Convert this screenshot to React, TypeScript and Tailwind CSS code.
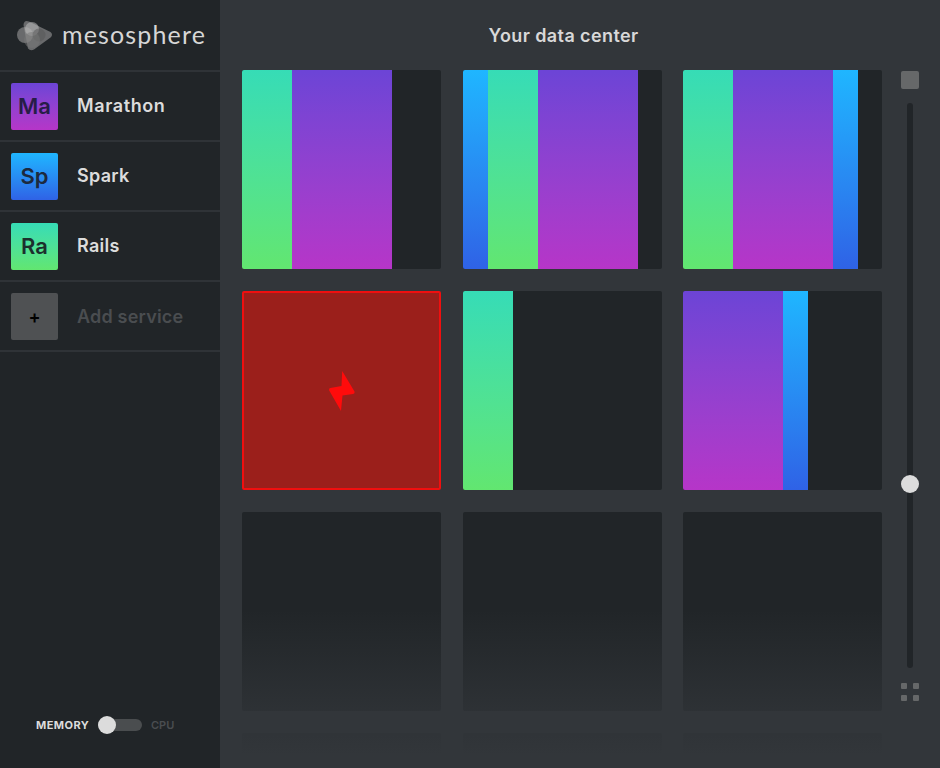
import React from 'react';

const fontStack = 'font-["Inter",sans-serif]';

const gradients = {
  rails: 'bg-gradient-to-b from-[#36dcb6] to-[#62e670]',
  marathon: 'bg-gradient-to-b from-[#6c44d6] to-[#b635c8]',
  spark: 'bg-gradient-to-b from-[#1fb6ff] to-[#2f62e6]',
};

type ServiceKey = keyof typeof gradients;

const barWidths: Record<ServiceKey, string> = {
  rails: 'w-[50px]',
  marathon: 'w-[100px]',
  spark: 'w-[25px]',
};

const services: { key: ServiceKey; short: string; name: string; textColor: string; tracking: string }[] = [
  { key: 'marathon', short: 'Ma', name: 'Marathon', textColor: 'text-[#271d47]', tracking: 'tracking-[0.6px]' },
  { key: 'spark', short: 'Sp', name: 'Spark', textColor: 'text-[#1c2a3f]', tracking: 'tracking-[0.3px]' },
  { key: 'rails', short: 'Ra', name: 'Rails', textColor: 'text-[#1c2f2d]', tracking: 'tracking-[0.3px]' },
];

const nodes: ServiceKey[][] = [
  ['rails', 'marathon'],
  ['spark', 'rails', 'marathon'],
  ['rails', 'marathon', 'spark'],
  [],
  ['rails'],
  ['marathon', 'spark'],
  [],
  [],
  [],
  [],
  [],
  [],
];

const MesosphereLogo = () => (
  <svg width="36" height="32" viewBox="0 0 36 32" fill="#9a9a9a" aria-hidden="true">
    <path d="M12 2.5 L33.5 13 Q36.5 15.5 33.5 18.5 L17 30.5 Q13.5 32.5 11 29.5 L6.5 6 Q7 0.5 12 2.5 Z" opacity="0.6" />
    <circle cx="8" cy="16" r="8" opacity="0.6" />
    <circle cx="15" cy="10" r="7" fill="#c4c4c4" opacity="0.5" />
    <circle cx="22" cy="16" r="6.5" fill="#555" opacity="0.5" />
    <circle cx="15" cy="21" r="8" fill="#777" opacity="0.5" />
  </svg>
);

const Bolt = () => (
  <svg width="28" height="42" viewBox="0 0 28 42" aria-hidden="true">
    <path
      d="M14.2 1 L26.5 21.5 Q27.2 23.6 25 24 L14.5 25.5 L13 41 L1.2 20.5 Q0.4 18.4 2.4 18 L13.5 16 Z"
      fill="#ff0b0b"
    />
  </svg>
);

export default function App() {
  return (
    <div className={`flex h-[768px] w-[940px] overflow-hidden bg-[#32363a] ${fontStack}`}>
      <aside className="flex h-full w-[220px] shrink-0 flex-col bg-[#212528]">
        <div className="flex h-[72px] items-center gap-[9px] border-b-2 border-[#2f3337] pl-[17px]">
          <MesosphereLogo />
          <span className='font-["Lato",sans-serif] text-[25px] tracking-[1.15px] text-[#d6d6d6]'>mesosphere</span>
        </div>
        {services.map(s => (
          <div key={s.key} className="flex h-[70px] items-center gap-[19px] border-b-2 border-[#2f3337] pl-[11px]">
            <div className={`flex h-[47px] w-[47px] items-center justify-center rounded-[2px] text-[22px] font-semibold ${gradients[s.key]} ${s.textColor}`}>
              {s.short}
            </div>
            <span className={`pb-[2px] text-[18px] font-semibold text-[#dcdcdc] ${s.tracking}`}>{s.name}</span>
          </div>
        ))}
        <div className="flex h-[70px] items-center gap-[19px] border-b-2 border-[#2f3337] pl-[11px]">
          <div className="flex h-[47px] w-[47px] items-center justify-center rounded-[2px] bg-[#4f5153] text-[18px] font-semibold text-black">
            +
          </div>
          <span className="text-[18px] font-semibold tracking-[0.2px] text-[#4a4d50]">Add service</span>
        </div>
        <div className="mt-auto mb-[35px] flex items-center pl-[36px] text-[11px]">
          <span className="w-[62px] font-bold tracking-[0.45px] text-[#dcdcdc]">MEMORY</span>
          <div className="h-[12px] w-[44px] rounded-full bg-[#4a4d4f]">
            <div className="-mt-[3px] h-[18px] w-[18px] rounded-full bg-[#dcdcdc]" />
          </div>
          <span className="ml-[9px] font-semibold text-[#4a4d50]">CPU</span>
        </div>
      </aside>

      <main className="relative flex h-full flex-1 overflow-hidden pl-[22px]">
        <div className="w-[640px] shrink-0">
          <h1 className="flex h-[70px] items-center justify-center pt-[1px] pl-[3px] text-[18px] font-semibold tracking-[0.4px] text-[#d8d8d8]">
            Your data center
          </h1>
          <div className="grid grid-cols-3 gap-x-[21.5px] gap-y-[22px]">
            {nodes.map((bars, i) =>
              i === 3 ? (
                <div key={i} className="flex h-[199px] items-center justify-center rounded-[2px] border-2 border-[#f00f0f] bg-[#9b1f1b]">
                  <Bolt />
                </div>
              ) : (
                <div key={i} className="flex h-[199px] overflow-hidden rounded-[2px] bg-[#212528]">
                  {bars.map((b, j) => (
                    <div key={j} className={`h-full ${barWidths[b]} ${gradients[b]}`} />
                  ))}
                </div>
              ),
            )}
          </div>
        </div>

        <div className="ml-[19px] flex h-full w-[18px] shrink-0 flex-col items-center pt-[71px]">
          <div className="h-[18px] w-[18px] rounded-[2px] bg-[#666869]" />
          <div className="relative mt-[14px] h-[565px] w-[6px] rounded-[3px] bg-[#212528]">
            <div className="absolute top-[372px] -left-[6px] h-[18px] w-[18px] rounded-full bg-[#dcdcdc]" />
          </div>
          <div className="mt-[15px] grid grid-cols-2 gap-[6px]">
            <div className="h-[6px] w-[6px] rounded-[1px] bg-[#666869]" />
            <div className="h-[6px] w-[6px] rounded-[1px] bg-[#666869]" />
            <div className="h-[6px] w-[6px] rounded-[1px] bg-[#666869]" />
            <div className="h-[6px] w-[6px] rounded-[1px] bg-[#666869]" />
          </div>
        </div>

        {/* fade over the lower rows */}
        <div className="pointer-events-none absolute right-[40px] bottom-0 left-0 h-[158px] bg-gradient-to-b from-[#32363a00] via-[#32363acc] via-[70%] to-[#32363a] to-[92%]" />
      </main>
    </div>
  );
}
